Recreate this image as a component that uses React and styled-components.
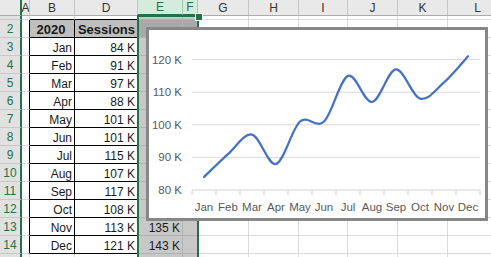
import React from 'react'
import styled, { createGlobalStyle } from 'styled-components'

const GlobalStyle = createGlobalStyle`
  html, body { margin: 0; padding: 0; background: #fff; }
  body { font-family: "Liberation Sans", Arial, sans-serif; }
`

const GREEN = '#217346'

const Sheet = styled.div`
  position: relative;
  width: 491px;
  height: 257px;
  overflow: hidden;
  background: #fff;
`

const Grid = styled.div`
  display: grid;
  grid-template-columns: 22px 8px 45px 63px 45px 15px 51px 50px 49px 50px 50px 60px;
  grid-template-rows: 16px 4px repeat(14, 18px);
`

const ColHead = styled.div`
  box-sizing: border-box;
  background: ${p => (p.$sel ? '#d3ecdd' : '#e9e9e9')};
  color: ${p => (p.$sel ? GREEN : '#333')};
  border-right: 1px solid ${p => (p.$sel ? '#9fc9b0' : '#c4c4c4')};
  border-bottom: ${p => (p.$sel ? `2px solid ${GREEN}` : '1px solid #ababab')};
  font-size: 12px;
  display: flex;
  align-items: center;
  justify-content: center;
  overflow: hidden;
`

const Corner = styled.div`
  box-sizing: border-box;
  background: #e9e9e9;
  border-right: 2px solid ${GREEN};
  border-bottom: 1px solid #ababab;
`

const RowHead = styled.div`
  box-sizing: border-box;
  background: #e1e1e1;
  color: ${GREEN};
  border-right: 2px solid ${GREEN};
  border-bottom: 1px solid #c9c9c9;
  font-size: 12px;
  display: flex;
  align-items: center;
  justify-content: center;
  overflow: hidden;
`

const Cell = styled.div`
  box-sizing: border-box;
  background: ${p => p.$bg};
  border-right: 1px solid ${p => p.$rb};
  border-bottom: 1px solid ${p => p.$bb};
  font-size: ${p => (p.$bold ? '13px' : '12px')};
  font-weight: ${p => (p.$bold ? 700 : 400)};
  color: #1a1a1a;
  text-align: ${p => p.$align};
  line-height: 18px;
  padding: 1px 2px 0 0;
  white-space: nowrap;
  overflow: hidden;
`

const Selection = styled.div`
  position: absolute;
  left: 137px;
  top: 15px;
  width: 62px;
  height: 250px;
  box-sizing: border-box;
  border: 2px solid ${GREEN};
  border-bottom: none;
  pointer-events: none;
`

const Handle = styled.div`
  position: absolute;
  left: 195px;
  top: 13px;
  width: 6px;
  height: 6px;
  background: ${GREEN};
  border: 1px solid #fff;
`

const Chart = styled.div`
  position: absolute;
  left: 146px;
  top: 27px;
  width: 342px;
  height: 194px;
  box-sizing: border-box;
  border: 3px solid #878787;
  background: #fff;
`

const cols = ['A', 'B', 'D', 'E', 'F', 'G', 'H', 'I', 'J', 'K', 'L']
const months = ['Jan', 'Feb', 'Mar', 'Apr', 'May', 'Jun', 'Jul', 'Aug', 'Sep', 'Oct', 'Nov', 'Dec']
const sessions = [84, 91, 97, 88, 101, 101, 115, 107, 117, 108, 113, 121]
// only the last two values of column E show from under the chart
const newUsers = { 13: 135, 14: 143 }

// r: 1 = sheet row 1, 2..14 = sheet rows 2..14, 15 = row 15
function cellText(r, c) {
  if (r === 2) return { B: '2020', D: 'Sessions' }[c] || ''
  if (r >= 3 && r <= 14) {
    const i = r - 3
    if (c === 'B') return months[i]
    if (c === 'D') return `${sessions[i]} K`
    if (c === 'E' && newUsers[r]) return `${newUsers[r]} K`
  }
  return ''
}

function cellProps(r, c) {
  const inTable = (c === 'B' || c === 'D') && r >= 2 && r <= 14
  const sel = c === 'E' || c === 'F'
  let bg = '#fff'
  if (sel) bg = r === 2 ? '#a9a9a9' : '#c8c8c8'
  else if (inTable && r === 2) bg = '#bfbfbf'
  let rb = sel ? '#b2b2b2' : '#dadada'
  let bb = sel ? '#b2b2b2' : '#dadada'
  if ((c === 'A' || inTable) && r >= 2 && r <= 14) rb = '#000'
  if ((c === 'B' || c === 'D') && r >= 1 && r <= 14) bb = '#000'
  return {
    $bg: bg,
    $rb: rb,
    $bb: bb,
    $bold: r === 2 && inTable,
    $align: r === 2 && c === 'B' ? 'center' : 'right',
  }
}

// chart geometry in page coordinates
const X0 = 192
const STEP = 24
const BASE = 190
const UNIT = 3.26
const pts = sessions.map((v, i) => [X0 + STEP / 2 + STEP * i, BASE - (v - 80) * UNIT])

function smoothPath(p) {
  let d = `M${p[0][0]},${p[0][1].toFixed(1)}`
  for (let i = 0; i < p.length - 1; i++) {
    const p0 = p[i - 1] || p[i]
    const p1 = p[i]
    const p2 = p[i + 1]
    const p3 = p[i + 2] || p2
    const c1 = [p1[0] + (p2[0] - p0[0]) / 6, p1[1] + (p2[1] - p0[1]) / 6]
    const c2 = [p2[0] - (p3[0] - p1[0]) / 6, p2[1] - (p3[1] - p1[1]) / 6]
    d += ` C${c1[0].toFixed(1)},${c1[1].toFixed(1)} ${c2[0].toFixed(1)},${c2[1].toFixed(1)} ${p2[0]},${p2[1].toFixed(1)}`
  }
  return d
}

const yTicks = [80, 90, 100, 110, 120]

const LineChart = () => (
  <svg width="336" height="188" viewBox="149 30 336 188" style={{ display: 'block' }}>
    {yTicks.slice(1).map(v => {
      const y = BASE - (v - 80) * UNIT
      return <line key={v} x1={X0} x2={X0 + STEP * 12} y1={y} y2={y} stroke="#d9d9d9" strokeWidth="1" />
    })}
    <line x1={X0} x2={X0 + STEP * 12} y1={BASE} y2={BASE} stroke="#d0d0d0" strokeWidth="1" />
    {Array.from({ length: 13 }, (_, k) => (
      <line key={k} x1={X0 + STEP * k} x2={X0 + STEP * k} y1={BASE} y2={BASE + 5} stroke="#d0d0d0" strokeWidth="1" />
    ))}
    {yTicks.map(v => (
      <text key={v} x="182" y={BASE - (v - 80) * UNIT + 4} textAnchor="end" fontSize="11.5" fill="#595959"
        fontFamily='"Liberation Sans", Arial, sans-serif'>{v} K</text>
    ))}
    {months.map((m, i) => (
      <text key={m} x={X0 + STEP / 2 + STEP * i} y="211" textAnchor="middle" fontSize="11.5" fill="#595959"
        fontFamily='"Liberation Sans", Arial, sans-serif'>{m}</text>
    ))}
    <path d={smoothPath(pts)} fill="none" stroke="#4472c4" strokeWidth="2.25" strokeLinecap="round" />
  </svg>
)

export default function App() {
  const rows = Array.from({ length: 15 }, (_, i) => i + 1)
  return (
    <Sheet>
      <GlobalStyle />
      <Grid>
        <Corner />
        {cols.map(c => (
          <ColHead key={c} $sel={c === 'E' || c === 'F'}>{c}</ColHead>
        ))}
        {rows.map(r => (
          <React.Fragment key={r}>
            <RowHead>{r === 1 || r === 15 ? '' : r}</RowHead>
            {cols.map(c => (
              <Cell key={c} {...cellProps(r, c)}>{cellText(r, c)}</Cell>
            ))}
          </React.Fragment>
        ))}
      </Grid>
      <Selection />
      <Handle />
      <Chart>
        <LineChart />
      </Chart>
    </Sheet>
  )
}
